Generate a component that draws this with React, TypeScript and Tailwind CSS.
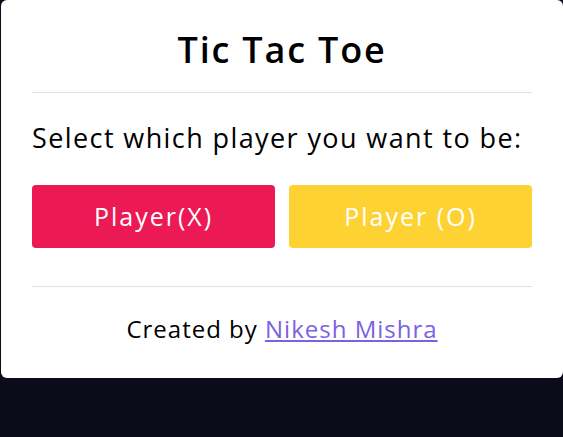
const App = () => (
  <div className="min-h-screen bg-[#0c0b1a]" style={{ fontFamily: '"Open Sans", "Noto Sans", sans-serif' }}>
    <div className="ml-[1px] w-[562px] h-[378px] bg-white rounded-md px-[31px]">
      <div className="pt-[31px] pb-[23px] border-b border-[#e3e3e3]">
        <h1 className="text-[36px] leading-[38px] font-semibold tracking-[1.8px] text-black text-center">Tic Tac Toe</h1>
      </div>
      <p className="mt-[29px] text-[27px] leading-[32px] tracking-[1.4px] text-black">Select which player you want to be:</p>
      <div className="mt-[31px] grid grid-cols-2 gap-[14px]">
        <button className="h-[63px] rounded bg-[#ec1a54] text-white text-[25px] tracking-[2px] font-medium">Player(X)</button>
        <button className="h-[63px] rounded bg-[#ffd233] text-white text-[25px] tracking-[2px] font-medium">Player (O)</button>
      </div>
      <div className="mt-[38px] border-t border-[#e3e3e3]" />
      <p className="mt-[27px] text-[24px] leading-[30px] tracking-[1px] text-black text-center">
        Created by{" "}
        <a href="#" className="text-[#7b61e4] underline">Nikesh Mishra</a>
      </p>
    </div>
  </div>
);

export default App;
